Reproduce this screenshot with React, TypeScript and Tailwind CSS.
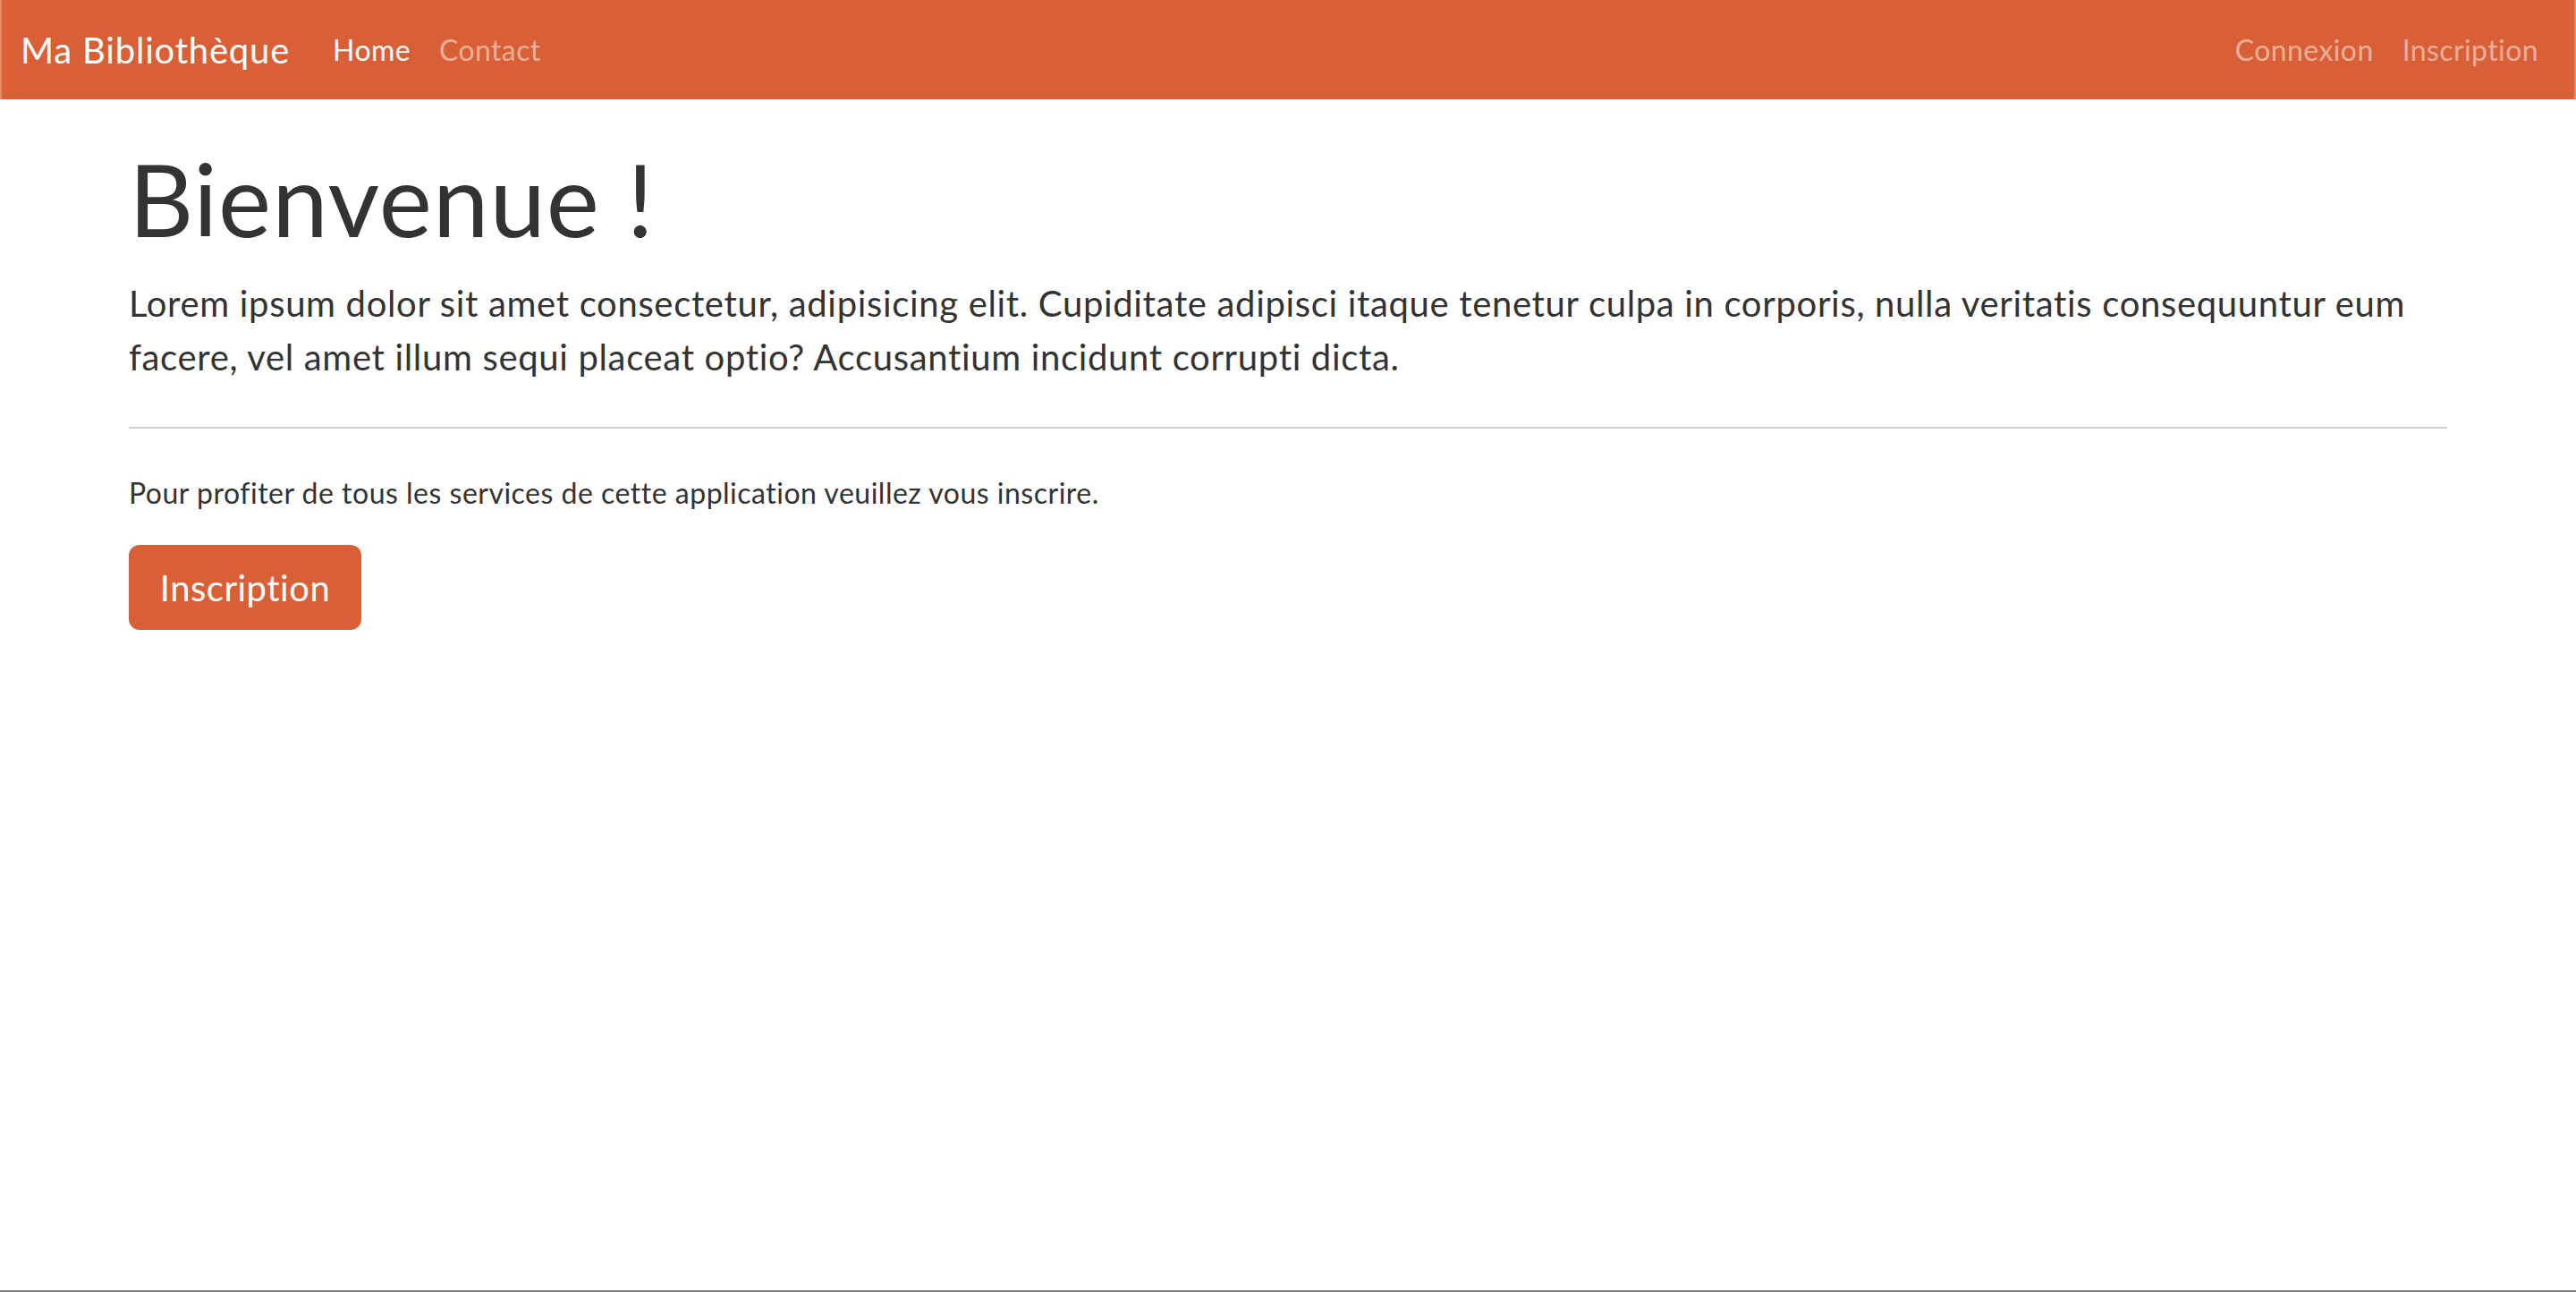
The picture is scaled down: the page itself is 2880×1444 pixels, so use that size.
const font = "font-['Lato','Noto_Sans',sans-serif] [font-variant-ligatures:none]";

function NavLink({ label, active = false }: { label: string; active?: boolean }) {
  return (
    <a
      href="#"
      className={
        active
          ? 'px-[16px] text-[32px] leading-[48px] tracking-[0.4px] text-white'
          : 'px-[16px] text-[32px] leading-[48px] tracking-[0.4px] text-white/50'
      }
    >
      {label}
    </a>
  );
}

export default function App() {
  return (
    <div className={`${font} min-h-screen bg-white text-[#333333] border-b-2 border-[#808080] flex flex-col`}>
      {/* Navbar */}
      <nav className="h-[111px] bg-[#d96036] flex items-center pl-[21px] pr-[24px] border-x-2 border-[#e88a68]">
        <a href="#" className="text-[40px] leading-[60px] tracking-[0.8px] text-white mr-[32px]">
          Ma Bibliothèque
        </a>
        <div className="flex items-center">
          <NavLink label="Home" active />
          <NavLink label="Contact" />
        </div>
        <div className="ml-auto flex items-center">
          <NavLink label="Connexion" />
          <NavLink label="Inscription" />
        </div>
      </nav>

      {/* Jumbotron */}
      <main className="flex-1 px-[144px] pt-[44px]">
        <h1 className="text-[112px] leading-[134px] font-normal tracking-[1px] mb-[20px]">Bienvenue !</h1>
        <p className="text-[40px] leading-[60px] tracking-[0.67px]">
          Lorem ipsum dolor sit amet consectetur, adipisicing elit. Cupiditate adipisci itaque tenetur culpa in
          corporis, nulla veritatis consequuntur eum facere, vel amet illum sequi placeat optio? Accusantium incidunt
          corrupti dicta.
        </p>
        <hr className="mt-[48px] mb-[48px] border-t-2 border-[#d0d0d0]" />
        <p className="text-[32px] leading-[48px] tracking-[0.5px] mb-[34px]">
          Pour profiter de tous les services de cette application veuillez vous inscrire.
        </p>
        <a
          href="#"
          className="inline-flex items-center justify-center h-[95px] w-[260px] rounded-[12px] bg-[#d96036] text-white text-[40px] tracking-[0.5px]"
        >
          Inscription
        </a>
      </main>
    </div>
  );
}
